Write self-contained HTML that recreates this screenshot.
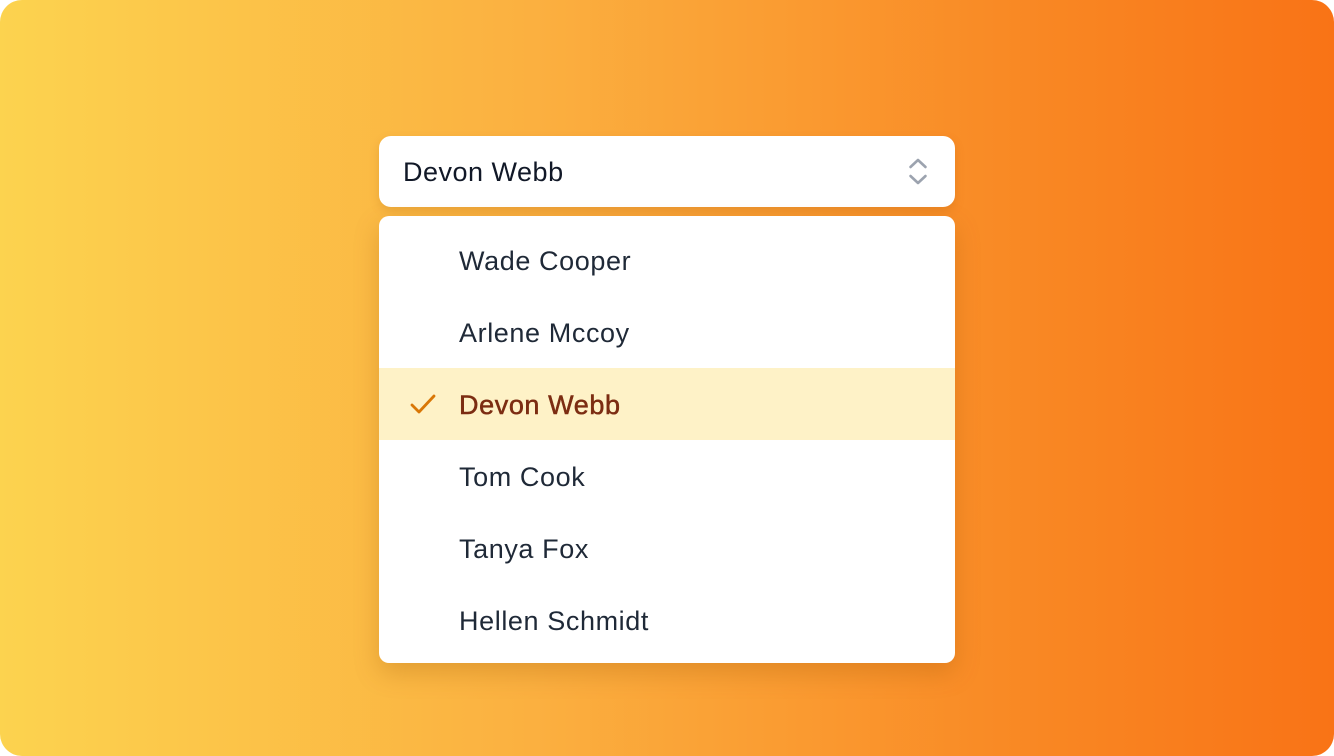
<!DOCTYPE html>
<html><head><style>
html,body{margin:0;padding:0;background:#fff;}
.bg{position:absolute;left:0;top:0;width:1334px;height:756px;border-radius:22px;background:linear-gradient(90deg,#fcd34f 0%,#fbb040 40%,#f98a25 75%,#f97316 100%);overflow:hidden;font-family:"Liberation Sans",sans-serif;}
.btn{position:absolute;left:379px;top:136px;width:576px;height:71px;background:#fff;border-radius:12px;box-shadow:0 4px 10px rgba(150,80,0,.18);}
.btn span{position:absolute;left:24px;top:21px;font-size:27px;color:#111827;letter-spacing:0.5px;}
.list{position:absolute;left:379px;top:216px;width:576px;height:447px;background:#fff;border-radius:10px;box-shadow:0 10px 25px rgba(150,80,0,.25);overflow:hidden;}
.it{position:absolute;left:0;width:576px;height:72px;font-size:27px;color:#1f2937;letter-spacing:0.6px;}
.it span{position:absolute;left:80px;top:22px;}
.sel{background:#fef2c7;color:#7c2d12;}
.sel span{-webkit-text-stroke:0.5px #7c2d12;}
</style></head><body>
<div class="bg">
<div class="btn"><span>Devon Webb</span>
<svg style="position:absolute;left:522px;top:16px" width="36" height="40" viewBox="0 0 36 40"><path d="M9.5 15 L17 8 L24.5 15 M9.5 24 L17 31 L24.5 24" fill="none" stroke="#9ca3af" stroke-width="2.6" stroke-linecap="round" stroke-linejoin="round"/></svg>
</div>
<div class="list">
<div class="it" style="top:8px"><span>Wade Cooper</span></div>
<div class="it" style="top:80px"><span>Arlene Mccoy</span></div>
<div class="it sel" style="top:152px"><span>Devon Webb</span>
<svg style="position:absolute;left:29px;top:24px" width="34" height="26" viewBox="0 0 34 26"><path d="M4 13 L11 20 L26 4" fill="none" stroke="#d97706" stroke-width="2.8" stroke-linecap="round" stroke-linejoin="round"/></svg></div>
<div class="it" style="top:224px"><span>Tom Cook</span></div>
<div class="it" style="top:296px"><span>Tanya Fox</span></div>
<div class="it" style="top:368px"><span>Hellen Schmidt</span></div>
</div>
</div>
</body></html>
